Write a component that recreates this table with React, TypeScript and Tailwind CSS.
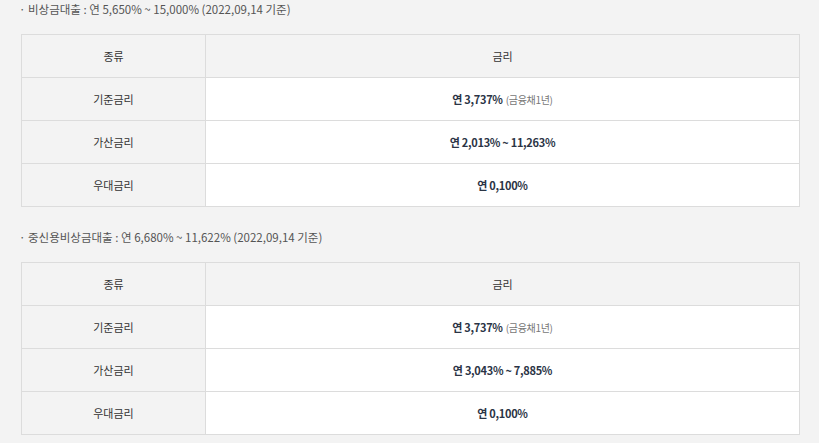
import React from "react";

type Row = { label: string; value: string; note?: string };

const font = { fontFamily: '"Noto Sans CJK KR", "Noto Sans", sans-serif' };

function RateTable({ rows }: { rows: Row[] }) {
  return (
    <table className="w-[779px] border-collapse text-[11px] text-[#333]">
      <thead>
        <tr className="h-[43px] bg-[#f3f3f3]">
          <th className="w-[184px] border border-[#dcdcdc] font-normal">종류</th>
          <th className="border border-[#dcdcdc] font-normal">금리</th>
        </tr>
      </thead>
      <tbody>
        {rows.map((r) => (
          <tr key={r.label} className="h-[43px]">
            <td className="border border-[#dcdcdc] bg-[#f3f3f3] text-center">{r.label}</td>
            <td className="border border-[#dcdcdc] bg-white text-center">
              <span className="text-[11px] font-semibold tracking-[-0.3px] text-[#2b3445]">{r.value}</span>
              {r.note && (
                <span className="ml-[3px] text-[10px] tracking-[-0.3px] text-[#777]">{r.note}</span>
              )}
            </td>
          </tr>
        ))}
      </tbody>
    </table>
  );
}

export default function App() {
  return (
    <div className="min-h-[443px] w-[819px] bg-[#f3f3f3] pl-[21px]" style={font}>
      <p className="-ml-[2px] pt-[1px] text-[11.5px] leading-[17px] text-[#555]">
        · 비상금대출 : 연 5,650% ~ 15,000% (2022,09,14 기준)
      </p>
      <div className="mt-[16px]">
        <RateTable
          rows={[
            { label: "기준금리", value: "연 3,737%", note: "(금융채1년)" },
            { label: "가산금리", value: "연 2,013% ~ 11,263%" },
            { label: "우대금리", value: "연 0,100%" },
          ]}
        />
      </div>
      <p className="-ml-[2px] mt-[22px] text-[11.5px] leading-[17px] text-[#555]">
        · 중신용비상금대출 : 연 6,680% ~ 11,622% (2022,09,14 기준)
      </p>
      <div className="mt-[16px]">
        <RateTable
          rows={[
            { label: "기준금리", value: "연 3,737%", note: "(금융채1년)" },
            { label: "가산금리", value: "연 3,043% ~ 7,885%" },
            { label: "우대금리", value: "연 0,100%" },
          ]}
        />
      </div>
    </div>
  );
}
